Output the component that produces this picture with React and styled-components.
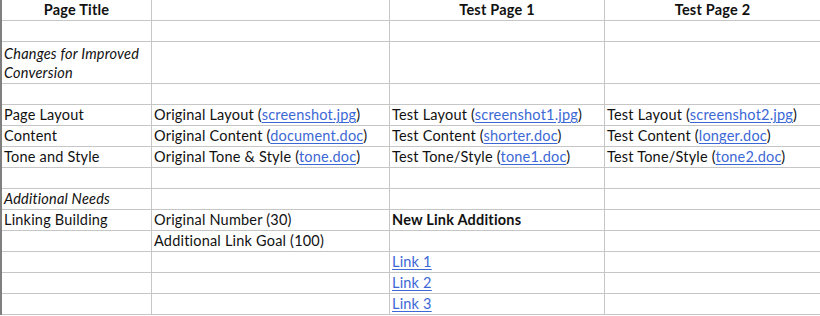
import * as React from "react"
import styled, { createGlobalStyle } from "styled-components"

const GlobalStyle = createGlobalStyle`
    html, body {
        margin: 0;
        padding: 0;
        background: #ffffff;
    }
    body {
        width: 820px;
        height: 316px;
        overflow: hidden;
    }
`

const Sheet = styled.div`
    display: grid;
    grid-template-columns: 150px 238px 215px 216px;
    grid-auto-rows: 21px;
    width: 821px;
    border-left: 2px solid #7f7f7f;
    font-family: "Lato", "Liberation Sans", sans-serif;
    font-size: 14.5px;
    letter-spacing: 0.2px;
    color: #111111;
`

const Cell = styled.div`
    display: flex;
    align-items: flex-end;
    justify-content: ${p => (p.$center ? "center" : "flex-start")};
    padding: 0 2px 1px 2px;
    border-right: 1px solid #c6c6c6;
    border-bottom: 1px solid #c6c6c6;
    grid-row: span ${p => (p.$tall ? 2 : 1)};
    font-weight: ${p => (p.$bold ? 700 : 400)};
    font-style: ${p => (p.$italic ? "italic" : "normal")};
    line-height: 19px;
    white-space: ${p => (p.$wrap ? "normal" : "nowrap")};
    overflow: hidden;
`

const FileLink = styled.a`
    color: #3c68d6;
    text-decoration: underline;
    text-underline-offset: 2px;
`

const rows = [
    { cells: [{ text: "Page Title", center: true, bold: true }, {}, { text: "Test Page 1", center: true, bold: true }, { text: "Test Page 2", center: true, bold: true }] },
    { cells: [{}, {}, {}, {}] },
    { tall: true, cells: [{ text: "Changes for Improved Conversion", italic: true, wrap: true }, {}, {}, {}] },
    { cells: [{}, {}, {}, {}] },
    { cells: [{ text: "Page Layout" }, { text: "Original Layout", file: "screenshot.jpg" }, { text: "Test Layout", file: "screenshot1.jpg" }, { text: "Test Layout", file: "screenshot2.jpg" }] },
    { cells: [{ text: "Content" }, { text: "Original Content", file: "document.doc" }, { text: "Test Content", file: "shorter.doc" }, { text: "Test Content", file: "longer.doc" }] },
    { cells: [{ text: "Tone and Style" }, { text: "Original Tone & Style", file: "tone.doc" }, { text: "Test Tone/Style", file: "tone1.doc" }, { text: "Test Tone/Style", file: "tone2.doc" }] },
    { cells: [{}, {}, {}, {}] },
    { cells: [{ text: "Additional Needs", italic: true }, {}, {}, {}] },
    { cells: [{ text: "Linking Building" }, { text: "Original Number (30)" }, { text: "New Link Additions", bold: true }, {}] },
    { cells: [{}, { text: "Additional Link Goal (100)" }, {}, {}] },
    { cells: [{}, {}, { link: "Link 1" }, {}] },
    { cells: [{}, {}, { link: "Link 2" }, {}] },
    { cells: [{}, {}, { link: "Link 3" }, {}] },
]

const App = () => {
    return (
        <>
            <GlobalStyle />
            <Sheet>
                {rows.map((row, r) =>
                    row.cells.map((c, i) => (
                        <Cell
                            key={r + "-" + i}
                            $tall={row.tall}
                            $center={c.center}
                            $bold={c.bold}
                            $italic={c.italic}
                            $wrap={c.wrap}
                        >
                            {c.link ? (
                                <span><FileLink href="#">{c.link}</FileLink></span>
                            ) : c.file ? (
                                <span>{c.text} (<FileLink href="#">{c.file}</FileLink>)</span>
                            ) : (
                                <span>{c.text}</span>
                            )}
                        </Cell>
                    ))
                )}
            </Sheet>
        </>
    )
}

export default App
